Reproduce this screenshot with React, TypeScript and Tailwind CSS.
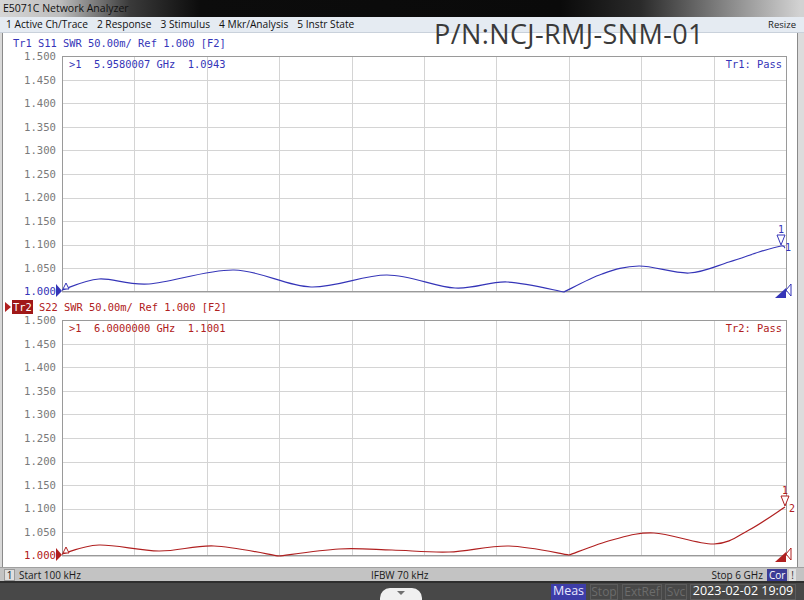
import React from "react";

type P = [number, number];

function catmull(points: P[]): string {
  if (points.length < 2) return "";
  let d = `M${points[0][0]},${points[0][1]}`;
  for (let i = 0; i < points.length - 1; i++) {
    const p0 = points[i - 1] || points[i];
    const p1 = points[i];
    const p2 = points[i + 1];
    const p3 = points[i + 2] || p2;
    const t = 6;
    const c1: P = [p1[0] + (p2[0] - p0[0]) / t, p1[1] + (p2[1] - p0[1]) / t];
    const c2: P = [p2[0] - (p3[0] - p1[0]) / t, p2[1] - (p3[1] - p1[1]) / t];
    d += ` C${c1[0].toFixed(1)},${c1[1].toFixed(1)} ${c2[0].toFixed(1)},${c2[1].toFixed(1)} ${p2[0]},${p2[1]}`;
  }
  return d;
}

function tracePath(segments: P[][]): string {
  return segments
    .map((s, i) => {
      const d = catmull(s);
      return i === 0 ? d : d.replace(/^M/, "L");
    })
    .join(" ");
}

const W = 724;
const H = 236;

const topTrace = tracePath([
  [[0, 234], [37, 223], [87, 228], [172, 214], [249, 231], [325, 219], [393, 232], [445, 226], [502, 236]],
  [[502, 236], [540, 218], [577, 210], [627, 217], [667, 206], [697, 196], [719, 190], [723, 192]],
]);

const bottomTrace = tracePath([
  [[0, 234], [37, 225], [97, 231], [152, 226], [217, 236]],
  [[217, 236], [277, 229], [330, 230], [387, 232], [447, 226], [507, 235]],
  [[507, 235], [550, 220], [592, 213], [652, 224], [687, 210], [723, 187]],
]);

const labels = ["1.500", "1.450", "1.400", "1.350", "1.300", "1.250", "1.200", "1.150", "1.100", "1.050", "1.000"];

const mono = '"DejaVu Sans Mono", "Liberation Mono", monospace';
const ui = '"Open Sans", "Noto Sans", "Liberation Sans", sans-serif';

function Plot({
  color,
  path,
  marker,
  pass,
  mk,
  mkLabel2,
}: {
  color: string;
  path: string;
  marker: string;
  pass: string;
  mk: P;
  mkLabel2: string;
}) {
  const xs = Array.from({ length: 11 }, (_, i) => (W / 10) * i);
  const ys = Array.from({ length: 11 }, (_, i) => (H / 10) * i);
  return (
    <div className="relative w-[724px] h-[236px]">
      <svg width={W} height={H} className="absolute left-0 top-0 overflow-visible">
        {xs.map((x, i) => (
          <line key={"x" + i} x1={Math.round(x) + 0.5} y1={0} x2={Math.round(x) + 0.5} y2={H} stroke="#d4d4d4" strokeWidth={1} />
        ))}
        {ys.map((y, i) => (
          <line key={"y" + i} x1={0} y1={Math.round(y) + 0.5} x2={W} y2={Math.round(y) + 0.5} stroke="#d4d4d4" strokeWidth={1} />
        ))}
        <rect x={0.5} y={0.5} width={W} height={H - 1} fill="none" stroke="#9a9a9a" strokeWidth={1} />
        <path d={path} fill="none" stroke={color} strokeWidth={1.2} />
        <polygon points={`-6,${H - 8} 0,${H - 1} -6,${H + 5}`} fill={color} />
        <polygon points={`1,${H - 3} 4,${H - 9} 7,${H - 3}`} fill="white" stroke={color} strokeWidth={1} />
        <polygon points={`${W - 11},${H + 6} ${W},${H - 4} ${W},${H + 6}`} fill={color} />
        <polygon points={`${W},${H - 2} ${W + 5},${H - 8} ${W + 5},${H + 4}`} fill="white" stroke={color} strokeWidth={1} />
        <polygon
          points={`${mk[0] - 4},${mk[1] - 11} ${mk[0] + 4},${mk[1] - 11} ${mk[0]},${mk[1] - 1}`}
          fill="white"
          stroke={color}
          strokeWidth={1}
        />
        <text x={mk[0] - 3} y={mk[1] - 13} fontSize={10} fill={color} fontFamily={mono}>
          1
        </text>
        <text x={mk[0] + 4} y={mk[1] + 5} fontSize={10} fill={color} fontFamily={mono}>
          {mkLabel2}
        </text>
      </svg>
      <div className="absolute left-[7px] top-[1px] text-[10.4px] leading-[14px] whitespace-pre" style={{ color, fontFamily: mono }}>
        {marker}
      </div>
      <div className="absolute right-[4px] top-[1px] text-[10.4px] leading-[14px] whitespace-pre" style={{ color, fontFamily: mono }}>
        {pass}
      </div>
    </div>
  );
}

function Chart({
  color,
  header,
  path,
  marker,
  pass,
  mk,
  mkLabel2,
}: {
  color: string;
  header: React.ReactNode;
  path: string;
  marker: string;
  pass: string;
  mk: P;
  mkLabel2: string;
}) {
  return (
    <div className="flex flex-col">
      <div className="h-[14px] flex items-center">{header}</div>
      <div className="flex mt-[2px]">
        <div className="w-[59px] h-[249px] -mt-[3px] flex flex-col justify-between items-end pr-[6px]">
          {labels.map((l, i) => (
            <div
              key={l}
              className="h-[14px] leading-[14px] text-[10.6px]"
              style={{ color: i === 10 ? color : "#7a7a7a", fontFamily: mono }}
            >
              {l}
            </div>
          ))}
        </div>
        <div className="mt-[4px]">
          <Plot color={color} path={path} marker={marker} pass={pass} mk={mk} mkLabel2={mkLabel2} />
        </div>
      </div>
    </div>
  );
}

export default function App() {
  return (
    <div className="relative w-[804px] h-[600px] overflow-hidden flex flex-col bg-[#d9d9d9]" style={{ fontFamily: ui }}>
      {/* title bar */}
      <div className="h-[17px] flex items-center bg-[linear-gradient(to_right,#d6d6d6_0px,#bdbdbd_60px,#3a3a3a_130px,#0c0c0c_200px,#0a0a0a_560px,#2a2a2a_640px,#8a8a8a_730px,#d2d2d2_800px)]">
        <span className="pl-[3px] text-[10.5px] text-[#111] leading-none">E5071C Network Analyzer</span>
      </div>
      {/* menu bar */}
      <div className="h-[16px] flex items-center justify-between bg-[#e5ebf2] border-b border-[#c9d1db] pl-[6px] pr-[8px]">
        <div className="flex gap-[9px] text-[10.2px] text-[#111] leading-none">
          <span>1 Active Ch/Trace</span>
          <span>2 Response</span>
          <span>3 Stimulus</span>
          <span>4 Mkr/Analysis</span>
          <span>5 Instr State</span>
        </div>
        <span className="text-[9.5px] text-[#222] leading-none">Resize</span>
      </div>
      {/* main */}
      <div className="flex h-[534px]">
        <div className="w-[3px] bg-[#d9d9d9] border-r border-[#8a8a8a]" />
        <div className="w-[792px] bg-white flex flex-col pt-[3px]">
          <Chart
            color="#3535b8"
            header={
              <div className="pl-[10px] text-[10.4px] leading-none text-[#3535b8]" style={{ fontFamily: mono }}>
                Tr1 S11 SWR 50.00m/ Ref 1.000 [F2]
              </div>
            }
            path={topTrace}
            marker={">1  5.9580007 GHz  1.0943"}
            pass="Tr1: Pass"
            mk={[719, 190]}
            mkLabel2="1"
          />
          <div className="h-[2px]" />
          <Chart
            color="#b02020"
            header={
              <div className="flex items-center pl-[2px] text-[10.4px] leading-none text-[#b02020]" style={{ fontFamily: mono }}>
                <svg width="6" height="10" viewBox="0 0 6 10" className="mr-[1px] shrink-0">
                  <polygon points="0,0 6,5 0,10" fill="#b02020" />
                </svg>
                <span className="bg-[#a01818] text-white px-[1px] h-[14px] flex items-center">Tr2</span>
                <span className="whitespace-pre"> S22 SWR 50.00m/ Ref 1.000 [F2]</span>
              </div>
            }
            path={bottomTrace}
            marker={">1  6.0000000 GHz  1.1001"}
            pass="Tr2: Pass"
            mk={[723, 187]}
            mkLabel2="2"
          />
        </div>
        <div className="w-[2px] bg-white" />
        <div className="flex-1 bg-[#dcdcdc] border-l border-[#8a8a8a]" />
      </div>
      {/* status bar */}
      <div className="h-[14px] bg-[#c3c3c3] flex items-center text-[10px] text-[#1a1a1a] leading-none border-t border-[#a0a0a0]">
        <span className="ml-[4px] w-[11px] h-[12px] bg-[#dedede] border border-[#9a9a9a] flex items-center justify-center">1</span>
        <span className="ml-[4px]">Start 100 kHz</span>
        <span className="ml-[290px]">IFBW 70 kHz</span>
        <span className="ml-auto mr-[4px]">Stop 6 GHz</span>
        <span className="h-[12px] px-[2px] bg-[#3c3c96] text-white flex items-center">Cor</span>
        <span className="ml-[2px] mr-[8px] h-[12px] px-[2px] bg-[#e0e0e0] text-[#333] flex items-center">!</span>
      </div>
      {/* bottom bar */}
      <div className="relative flex-1 bg-[#484848] border-t-2 border-[#2e2e2e] flex items-center justify-end pr-[8px] text-[12px] leading-none whitespace-nowrap">
        <div className="absolute left-[380px] top-[5px] w-[42px] h-[16px] bg-[#f0f0f0] rounded-t-[10px] flex justify-center pt-[3px]">
          <span className="w-0 h-0 border-x-[4px] border-x-transparent border-t-[4px] border-t-[#707070]" />
        </div>
        <span className="w-[35px] h-[16px] bg-[#3d3da8] text-[#e8e8ff] text-[12.5px] flex items-center justify-center">Meas</span>
        <span className="ml-[4px] w-[28px] h-[16px] border border-[#5c5c5c] text-[#6c6c6c] flex items-center justify-center">Stop</span>
        <span className="ml-[4px] w-[40px] h-[16px] border border-[#5c5c5c] text-[#6c6c6c] flex items-center justify-center">ExtRef</span>
        <span className="ml-[3px] w-[22px] h-[16px] border border-[#5c5c5c] text-[#6c6c6c] flex items-center justify-center">Svc</span>
        <span className="ml-[3px] w-[106px] h-[16px] border border-[#5c5c5c] text-white text-[12.5px] flex items-center justify-center">
          2023-02-02 19:09
        </span>
      </div>
      {/* part number overlay */}
      <div
        className="absolute left-[434px] top-[20px] text-[27px] leading-none text-[#3a3a3a] tracking-[0.4px]"
        style={{ fontFamily: '"Open Sans", "Noto Sans", sans-serif' }}
      >
        P/N:NCJ-RMJ-SNM-01
      </div>
    </div>
  );
}
